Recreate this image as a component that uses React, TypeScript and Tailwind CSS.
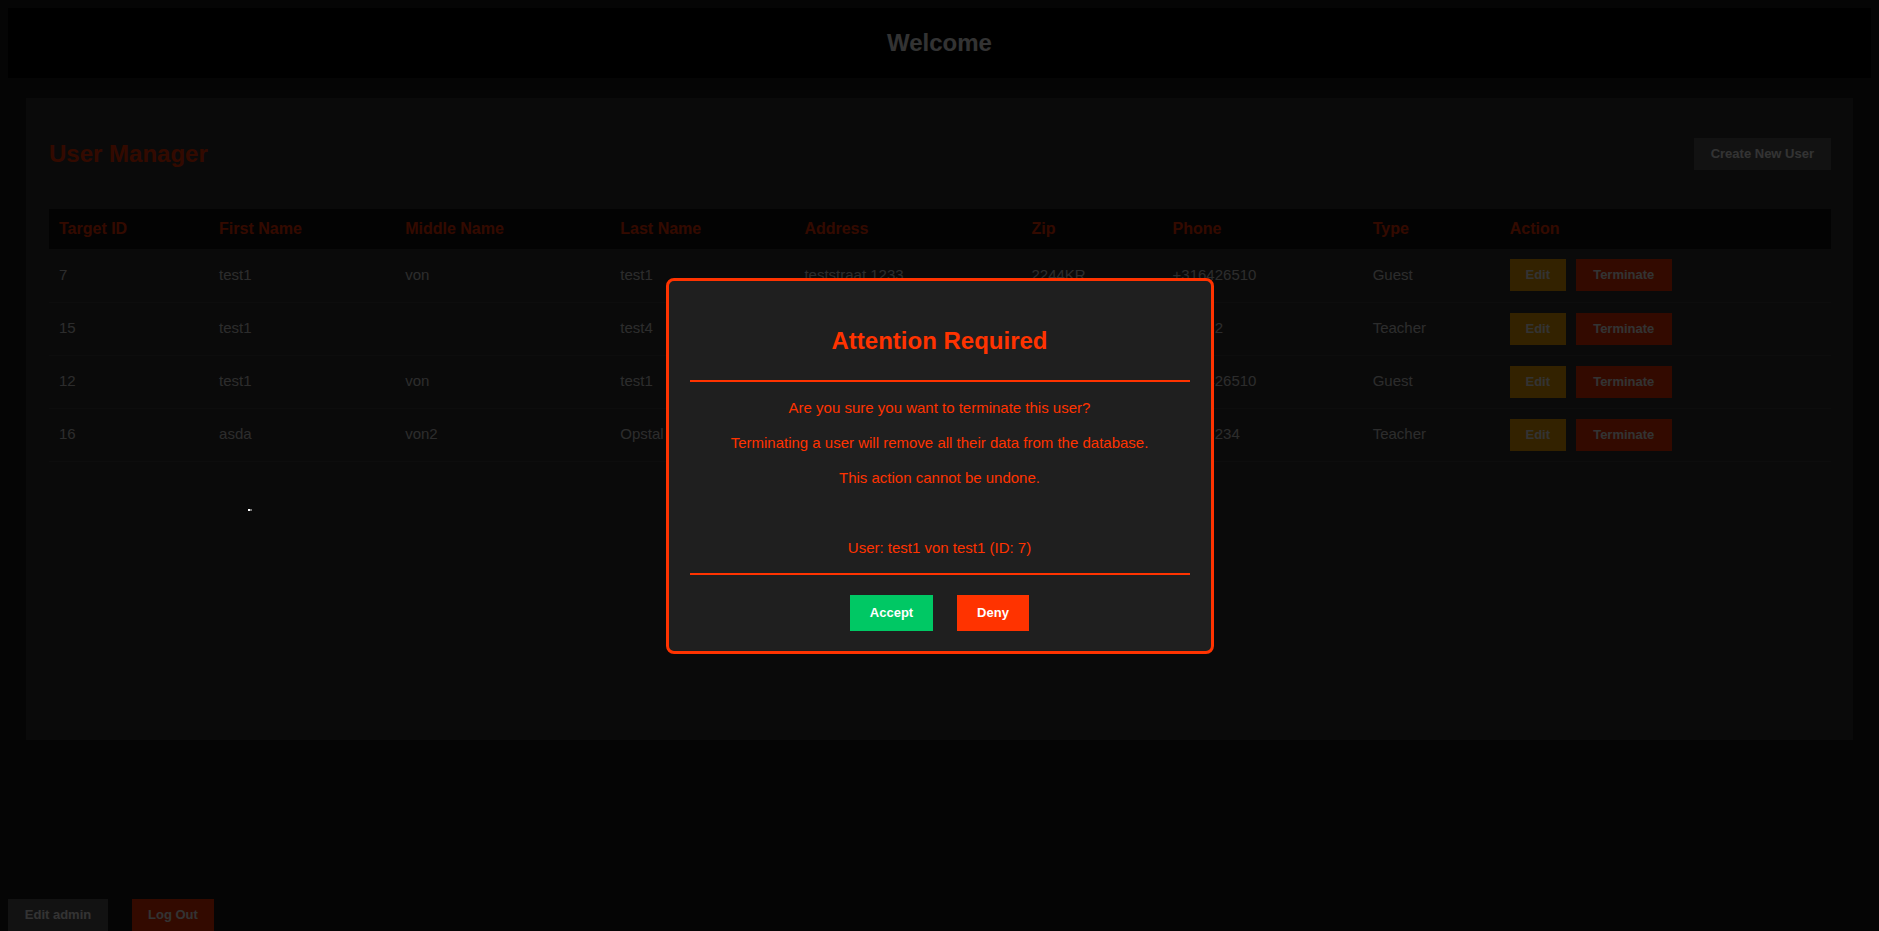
import React from "react";

type Row = {
  id: string;
  first: string;
  middle: string;
  last: string;
  address: string;
  zip: string;
  phone: string;
  type: string;
};

const rows: Row[] = [
  { id: "7", first: "test1", middle: "von", last: "test1", address: "teststraat 1233", zip: "2244KR", phone: "+316426510", type: "Guest" },
  { id: "15", first: "test1", middle: "", last: "test4", address: "teststraat 12", zip: "2244KR", phone: "+31632", type: "Teacher" },
  { id: "12", first: "test1", middle: "von", last: "test1", address: "teststraat 1233", zip: "2244KR", phone: "+316426510", type: "Guest" },
  { id: "16", first: "asda", middle: "von2", last: "Opstal", address: "Opstalstraat 4", zip: "1234AB", phone: "+3165234", type: "Teacher" },
];

const headers: { label: string; w: string }[] = [
  { label: "Target ID", w: "w-[160px]" },
  { label: "First Name", w: "w-[186px]" },
  { label: "Middle Name", w: "w-[215px]" },
  { label: "Last Name", w: "w-[184px]" },
  { label: "Address", w: "w-[227px]" },
  { label: "Zip", w: "w-[141px]" },
  { label: "Phone", w: "w-[200px]" },
  { label: "Type", w: "w-[137px]" },
  { label: "Action", w: "w-[331px]" },
];

export default function App() {
  return (
    <div className="relative flex h-[931px] flex-col overflow-hidden bg-[#1a1a1a] font-['Liberation_Sans',Arial,sans-serif]">
      {/* Header */}
      <div className="px-2 pt-2">
        <div className="flex h-[70px] items-center justify-center bg-black">
          <h1 className="text-[24px] font-bold leading-[28px] text-white">Welcome</h1>
        </div>
      </div>

      {/* Panel */}
      <div className="mx-[26px] mt-[20px] h-[642px] bg-[#333333] pl-[23px] pr-[22px] pt-[40px]">
        <div className="flex h-[32px] items-center justify-between">
          <h2 className="text-[24px] font-bold leading-[28px] text-[#ff3300]">User Manager</h2>
          <button className="h-[32px] bg-[#5a5a5a] px-[17px] text-[13px] font-bold leading-[16px] text-white">
            Create New User
          </button>
        </div>

        <table className="mt-[39px] w-full table-fixed">
          <thead>
            <tr className="h-[40px] bg-[#111111]">
              {headers.map((h) => (
                <th key={h.label} className={`${h.w} pl-[10px] text-left text-[16px] font-bold text-[#ff3300]`}>
                  {h.label}
                </th>
              ))}
            </tr>
          </thead>
          <tbody>
            {rows.map((r) => (
              <tr key={r.id} className="h-[53px] border-b border-[#444444] text-[15px] text-[#dddddd]">
                <td className="pl-[10px]">{r.id}</td>
                <td className="pl-[10px]">{r.first}</td>
                <td className="pl-[10px]">{r.middle}</td>
                <td className="pl-[10px]">{r.last}</td>
                <td className="pl-[10px]">{r.address}</td>
                <td className="pl-[10px]">{r.zip}</td>
                <td className="pl-[10px]">{r.phone}</td>
                <td className="pl-[10px]">{r.type}</td>
                <td className="pl-[10px]">
                  <div className="flex gap-[10px]">
                    <button className="h-[32px] w-[56px] bg-[#ffaa00] text-[13px] font-bold leading-[16px] text-white">
                      Edit
                    </button>
                    <button className="h-[32px] w-[96px] bg-[#ff3300] text-[13px] font-bold leading-[16px] text-white">
                      Terminate
                    </button>
                  </div>
                </td>
              </tr>
            ))}
          </tbody>
        </table>
      </div>

      {/* Footer */}
      <div className="mt-auto flex gap-[24px] px-2">
        <button className="h-[32px] w-[100px] bg-[#5a5a5a] text-[13px] font-bold leading-[16px] text-white">
          Edit admin
        </button>
        <button className="h-[32px] w-[82px] bg-[#ff3300] text-[13px] font-bold leading-[16px] text-white">
          Log Out
        </button>
      </div>

      {/* Overlay */}
      <div className="absolute inset-0 flex items-center justify-center bg-black/80">
        <span className="absolute left-[248px] top-[509px] h-[2px] w-[2px] bg-white" />
        <span className="absolute left-[250px] top-[509px] h-[2px] w-[2px] bg-[#777777]" />
        <div className="w-[548px] rounded-[8px] border-[3px] border-[#ff3300] bg-[#1f1f1f] px-[21px] pb-[20px] pt-[46px] text-center text-[#ff3300]">
          <h3 className="text-[24px] font-bold leading-[28px]">Attention Required</h3>
          <div className="mt-[25px] h-[2px] bg-[#ff3300]" />
          <p className="mt-[17px] text-[15px] leading-[17px]">Are you sure you want to terminate this user?</p>
          <p className="mt-[18px] text-[15px] leading-[17px]">
            Terminating a user will remove all their data from the database.
          </p>
          <p className="mt-[18px] text-[15px] leading-[17px]">This action cannot be undone.</p>
          <p className="mt-[53px] text-[15px] leading-[17px]">User: test1 von test1 (ID: 7)</p>
          <div className="mt-[17px] h-[2px] bg-[#ff3300]" />
          <div className="mt-[20px] flex justify-center gap-[24px]">
            <button className="h-[36px] w-[83px] bg-[#00c864] text-[13px] font-bold leading-[16px] text-white">
              Accept
            </button>
            <button className="h-[36px] w-[72px] bg-[#ff3300] text-[13px] font-bold leading-[16px] text-white">
              Deny
            </button>
          </div>
        </div>
      </div>
    </div>
  );
}
